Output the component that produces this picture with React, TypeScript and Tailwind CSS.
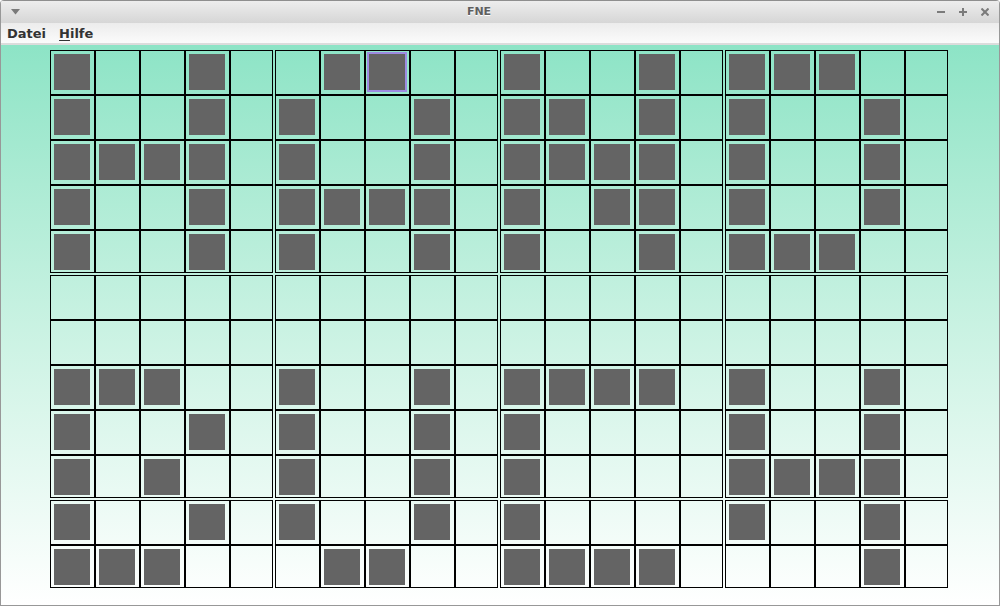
const BOARD = [
  '#..#..##..#..#.###..',
  '#..#.#..#.##.#.#..#.',
  '####.#..#.####.#..#.',
  '#..#.####.#.##.#..#.',
  '#..#.#..#.#..#.###..',
  '....................',
  '....................',
  '###..#..#.####.#..#.',
  '#..#.#..#.#....#..#.',
  '#.#..#..#.#....####.',
  '#..#.#..#.#....#..#.',
  '###...##..####....#.',
];

const SELECTED = { row: 0, col: 7 };

const Cell = ({ filled, selected, endCol, endRow }: { filled: boolean; selected: boolean; endCol: boolean; endRow: boolean }) => (
  <div className="h-[45px] w-[45px] flex-none">
    <div
      className={[
        'border border-black p-[3px]',
        endCol ? 'w-[43px]' : 'w-[45px]',
        endRow ? 'h-[43px]' : 'h-[45px]',
      ].join(' ')}>
      {filled && (
        <div className={['h-[36px] w-[36px] bg-[#646464]', selected ? 'ring-2 ring-[#9d8be2]' : ''].join(' ')} />
      )}
    </div>
  </div>
);

export default function App() {
  return (
    <div className="flex h-[606px] w-[1000px] flex-col overflow-hidden rounded-t-[4px] border border-t-0 border-[#989898] font-['DejaVu_Sans',sans-serif]">
      <div className="flex h-[23px] flex-none items-center border-t border-[#8e8e8e] bg-gradient-to-b from-[#ededed] to-[#d6d6d6]">
        <div className="flex w-[28px] justify-center pl-[1px]">
          <svg width="9" height="6" viewBox="0 0 9 6">
            <polygon points="0,0 9,0 4.5,5.5" fill="#7a7a7a" />
          </svg>
        </div>
        <div className="flex flex-1 justify-center">
          <span className="text-[11px] font-bold text-[#5f5f5f] [text-shadow:0_1px_0_#ffffff]">FNE</span>
        </div>
        <div className="flex w-[70px] items-center gap-[14px] pl-[8px]">
          <svg width="8" height="8" viewBox="0 0 8 8">
            <line x1="0" y1="4" x2="8" y2="4" stroke="#7b7b7b" strokeWidth="2" />
          </svg>
          <svg width="8" height="8" viewBox="0 0 8 8">
            <line x1="0" y1="4" x2="8" y2="4" stroke="#7b7b7b" strokeWidth="2" />
            <line x1="4" y1="0" x2="4" y2="8" stroke="#7b7b7b" strokeWidth="2" />
          </svg>
          <svg width="8" height="8" viewBox="0 0 8 8">
            <line x1="0.5" y1="0.5" x2="7.5" y2="7.5" stroke="#7b7b7b" strokeWidth="2" />
            <line x1="7.5" y1="0.5" x2="0.5" y2="7.5" stroke="#7b7b7b" strokeWidth="2" />
          </svg>
        </div>
      </div>

      <div className="flex h-[22px] flex-none items-center gap-[13px] border-b-2 border-[#dcdcdc] bg-gradient-to-b from-[#ececec] to-[#fbfbfb] pl-[6px] pt-[1px] text-[13px] font-bold text-[#333333]">
        <span>Datei</span>
        <span>
          <span className="underline underline-offset-2">H</span>ilfe
        </span>
      </div>

      <div className="flex-1 bg-gradient-to-b from-[#8de4c6] to-[#ffffff] pl-[49px] pt-[5px]">
        <div className="flex flex-col">
          {BOARD.map((line, r) => (
            <div key={r} className="flex">
              {line.split('').map((ch, c) => (
                <Cell
                  key={c}
                  filled={ch === '#'}
                  selected={r === SELECTED.row && c === SELECTED.col}
                  endCol={c % 5 === 4}
                  endRow={r % 5 === 4 || r === BOARD.length - 1}
                />
              ))}
            </div>
          ))}
        </div>
      </div>
    </div>
  );
}
